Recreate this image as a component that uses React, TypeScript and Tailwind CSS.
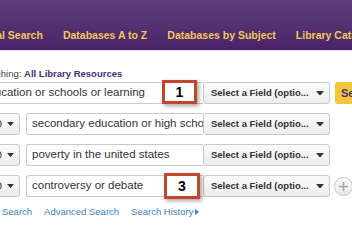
import React from 'react';

const font = { fontFamily: '"Liberation Sans", Arial, sans-serif' };

const Caret: React.FC<{ w?: number }> = ({ w = 8 }) => (
  <svg width={w} height={w * 0.6} viewBox="0 0 8 5" className="shrink-0">
    <path d="M0 0h8L4 5z" fill="#333" />
  </svg>
);

const FieldSelect: React.FC = () => (
  <div className="flex h-[22px] w-[127px] shrink-0 items-center justify-between rounded-[3px] border border-[#c9c9c9] bg-gradient-to-b from-[#fbfbfb] to-[#ececec] pl-[7px] pr-[5px] text-[9.5px] font-bold text-[#333]">
    <span className="whitespace-nowrap">Select a Field (optio...</span>
    <Caret />
  </div>
);

const BoolSelect: React.FC = () => (
  <div className="flex h-[22px] w-[44px] shrink-0 items-center justify-end gap-[5px] rounded-[3px] border border-[#c9c9c9] bg-gradient-to-b from-[#fbfbfb] to-[#ececec] pr-[5px] text-[10px] text-[#333]">
    <span>AND</span>
    <Caret w={7} />
  </div>
);

const TextBox: React.FC<{ text: string; width: string }> = ({ text, width }) => (
  <div
    className={`flex h-[22px] shrink-0 items-center overflow-hidden whitespace-nowrap rounded-l-[3px] border border-r-0 border-[#c9c9c9] bg-white pl-[5px] text-[11.5px] text-[#333] ${width}`}
  >
    {text}
  </div>
);

const Callout: React.FC<{ n: string; className: string }> = ({ n, className }) => (
  <div
    className={`absolute flex items-center justify-center border-[3px] border-[#c4452d] bg-white text-[14px] font-bold text-black shadow-[2px_2px_4px_rgba(0,0,0,0.35)] ${className}`}
  >
    {n}
  </div>
);

const App: React.FC = () => {
  const rows = [
    'secondary education or high school',
    'poverty in the united states',
    'controversy or debate',
  ];

  return (
    <div className="relative h-[235px] w-[352px] overflow-hidden bg-white" style={font}>
      {/* Header nav */}
      <header className="flex h-[51px] items-center gap-[20px] border-b border-[#e8e2ee] bg-gradient-to-b from-[#5e3e7c] to-[#4a2367] pt-[21px] text-[10.5px] font-bold whitespace-nowrap text-[#f2c759]">
        <span className="ml-[-33px]">Journal Search</span>
        <span>Databases A to Z</span>
        <span>Databases by Subject</span>
        <span>Library Catalog</span>
      </header>

      <main className="ml-[-24px] flex flex-col">
        <p className="mt-[17px] mb-[2px] h-[12px] text-[9.5px] leading-[12px] whitespace-nowrap text-[#444]">
          <span>Searching: </span>
          <span className="font-bold text-[#4b2c78]">All Library Resources</span>
        </p>

        <div className="flex flex-col gap-[9px]">
          <div className="flex items-center">
            <TextBox text="education or schools or learning" width="w-[227px]" />
            <FieldSelect />
            <div className="ml-[5px] flex h-[22px] w-[60px] shrink-0 items-center rounded-[3px] bg-[#f3c73b] pl-[6px] text-[11px] font-bold text-[#4b2c78]">
              Search
            </div>
          </div>
          {rows.map((r, i) => (
            <div key={r} className="flex items-center">
              <BoolSelect />
              <div className="w-[6px] shrink-0" />
              <TextBox text={r} width="w-[177px]" />
              <FieldSelect />
              {i === rows.length - 1 && (
                <div className="ml-[4px] flex h-[19px] w-[19px] shrink-0 items-center justify-center rounded-full border border-[#c9c9c9] bg-gradient-to-b from-[#fafafa] to-[#e8e8e8]">
                  <svg width="11" height="11" viewBox="0 0 11 11">
                    <path d="M5.5 1v9M1 5.5h9" stroke="#a8a8a8" strokeWidth="1.6" />
                  </svg>
                </div>
              )}
            </div>
          ))}
        </div>

        <div className="mt-[9px] flex h-[12px] items-center gap-[12px] pl-[26px] text-[9.5px] whitespace-nowrap text-[#3d80c6]">
          <span>Search</span>
          <span>Advanced Search</span>
          <span className="flex items-center gap-[2px]">
            Search History
            <svg width="4" height="6" viewBox="0 0 4 6">
              <path d="M0 0l4 3-4 3z" fill="#3d80c6" />
            </svg>
          </span>
        </div>
      </main>

      <div className="mt-[19px] flex h-[10px] border-t border-[#e6e6e6]">
        <div className="w-[65px] border-r border-[#e6e6e6]" />
      </div>

      <Callout n="1" className="left-[162px] top-[80px] h-[24px] w-[35px]" />
      <Callout n="3" className="left-[164px] top-[173px] h-[26px] w-[36px]" />
    </div>
  );
};

export default App;
